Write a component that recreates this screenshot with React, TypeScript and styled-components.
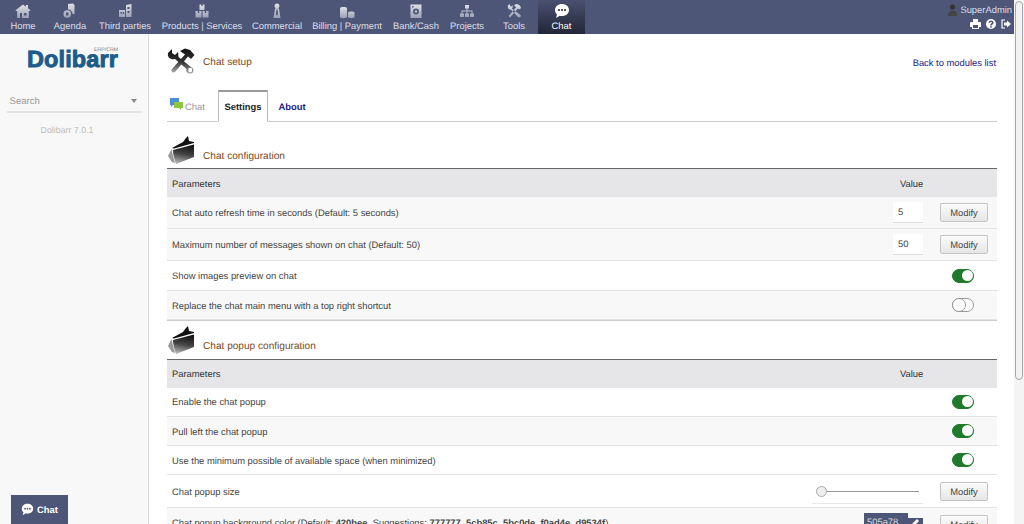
import React from "react";
import styled, { createGlobalStyle } from "styled-components";

const Global = createGlobalStyle`
  html, body { height: 100%; overflow: hidden; }
  body { margin: 0; background: #fff; font-family: "Liberation Sans", Arial, sans-serif; font-size: 9.4px; color: #444; text-rendering: geometricPrecision; }
`;

const Page = styled.div`display: flex; height: 100vh;`;
const Content = styled.div`flex: 1; min-width: 0; overflow: hidden;`;
const ScrollTrack = styled.div`flex: none; width: 10px; background: #f4f4f4; padding: 1px 1px 0 1px; box-sizing: border-box;`;
const ScrollThumb = styled.div`height: 379px; background: #f2f2f2; border: 1.5px solid #a8a8a8; border-radius: 4px; box-sizing: border-box;`;

const TopBar = styled.header`
  height: 34px;
  background: #4e5678;
  display: flex;
  justify-content: space-between;
`;
const Menu = styled.nav`display: flex;`;
const MenuItem = styled.a<{ $w: number; $active?: boolean }>`
  width: ${(p) => p.$w}px;
  height: 34px;
  display: flex;
  flex-direction: column;
  align-items: center;
  color: ${(p) => (p.$active ? "#fff" : "#dcdfe8")};
  font-size: 9.4px;
  line-height: 11px;
  white-space: nowrap;
  background: ${(p) => (p.$active ? "linear-gradient(#4a5070, #222637)" : "none")};
  svg { margin-top: 3px; height: 16px; width: 16px; margin-bottom: 1px; }
`;
const UserArea = styled.div`
  display: flex; flex-direction: column; align-items: flex-end; padding: 3px 2px 0 0; color: #dcdfe8;
`;
const UserName = styled.div`display: flex; align-items: center; gap: 3px; height: 13px;`;
const UserIcons = styled.div`display: flex; gap: 5px; margin-top: 3px; padding-right: 1px; color: #fff;`;

const Body = styled.div`display: flex; min-height: 688px;`;
const Sidebar = styled.aside`
  width: 148px; flex: none; background: #f8f8f8; border-right: 1px solid #ddd; box-sizing: content-box;
  display: flex; flex-direction: column; align-items: center;
`;
const Logo = styled.div`
  margin-top: 12px; margin-right: 3px; position: relative; font-weight: 700; font-size: 23.5px;
  line-height: 26px; color: #1c5d8c; -webkit-text-stroke: 0.9px #1c5a8a;
  letter-spacing: 0.1px;
`;
const LogoTag = styled.span`
  position: absolute; right: 0; top: 1px; font-size: 5.2px; line-height: 6px; font-weight: 400; letter-spacing: 0; color: #777; -webkit-text-stroke: 0;
`;
const Search = styled.div`
  margin-top: 22px; height: 14px; width: 127px; border-bottom: 2px solid #e4e4e4; display: flex; justify-content: space-between; align-items: center;
  padding: 0 4px 3px 3px; color: #999; font-size: 9.6px; box-sizing: content-box; margin-left: -1px;
  &::after { content: ""; border: 3.5px solid transparent; border-top: 4px solid #888; border-bottom: 0; }
`;
const Version = styled.div`margin-top: 12px; margin-right: 14px; color: #bbb; font-size: 8.8px;`;

const Main = styled.main`flex: 1; padding: 0 17px 20px 18px; min-width: 0;`;
const TitleRow = styled.div`display: flex; align-items: center; height: 54px; justify-content: space-between;`;
const TitleLeft = styled.div`display: flex; align-items: center; gap: 8px; color: #7a4a1c; font-size: 10.1px;`;
const TitleText = styled.span`padding-top: 2px;`;
const BackLink = styled.a`color: #1a1a86; font-size: 9.4px; padding-top: 2px; padding-right: 1px;`;

const Tabs = styled.div`display: flex; height: 32px; margin-top: 2px; border-bottom: 1px solid #ccc; align-items: stretch; box-sizing: border-box;`;
const Tab = styled.div<{ $active?: boolean; $muted?: boolean; $w: number }>`
  width: ${(p) => p.$w}px;
  box-sizing: border-box;
  display: flex; align-items: center; justify-content: ${(p) => (p.$muted ? "flex-start" : "center")}; gap: 2px; height: 32px;
  padding-left: ${(p) => (p.$muted ? 3 : 0)}px;
  font-size: 9.4px; font-weight: ${(p) => (p.$muted ? 400 : 700)};
  color: ${(p) => (p.$muted ? "#999" : p.$active ? "#222" : "#1a1a86")};
  ${(p) => p.$active && `background:#fff; border:1px solid #bbb; border-top:2px solid #999; border-bottom:1px solid #fff;`}
`;
const TabIcon = styled.svg`margin-top: -5px;`;

const SectionTitle = styled.div<{ $first?: boolean }>`
  display: flex; align-items: flex-end; gap: 8px; color: #7a4a1c; font-size: 10.1px;
  height: ${(p) => (p.$first ? 46 : 38)}px; padding-bottom: ${(p) => (p.$first ? 6 : 7)}px; box-sizing: border-box;
  svg { margin-bottom: -2px; }
`;
const SectionText = styled.span`padding-left: 1px;`;
const Table = styled.div`border-top: 1px solid #666; border-bottom: 1px solid #ccc;`;
const HeadRow = styled.div<{ $lift?: boolean }>`
  display: flex; align-items: center; height: 28px; box-sizing: border-box; background: #e6e6e8; padding-left: 5px; color: #333;
  padding-bottom: ${(p) => (p.$lift ? 2 : 0)}px;
`;
const HeadValue = styled.div`margin-left: auto; width: 97px;`;
const Row = styled.div<{ $h: number; $alt?: boolean }>`
  display: flex; align-items: center; height: ${(p) => p.$h}px; box-sizing: border-box; padding-left: 5px;
  background: ${(p) => (p.$alt ? "#f8f8f8" : "#fff")}; border-bottom: 1px solid #e4e4e4; color: #444;
`;
const RowEnd = styled.div`margin-left: auto; display: flex; align-items: center;`;
const RaisedLabel = styled.span<{ $lift: number }>`margin-bottom: ${(p) => p.$lift}px;`;
const Input = styled.div`
  width: 30px; height: 21px; box-sizing: border-box; background: #fff; border-bottom: 1px solid #ddd; padding: 4px 0 0 5px; margin-right: 17px; line-height: 12px;
`;
const Btn = styled.div`
  width: 46px; height: 17px; border: 1px solid #c4c4c4; border-radius: 2px; background: linear-gradient(#fbfbfb, #e6e6e6);
  display: flex; align-items: center; justify-content: center; color: #444; margin-right: 9px; box-sizing: content-box;
`;
const Toggle = styled.div<{ $on?: boolean }>`
  width: 22px; height: 14px; border-radius: 7px; box-sizing: border-box; margin-right: 23px; position: relative;
  background: ${(p) => (p.$on ? "#1f7a2c" : "#fff")};
  border: 1.5px solid ${(p) => (p.$on ? "#1f7a2c" : "#999")};
  &::after {
    content: ""; position: absolute; border-radius: 50%; background: #fff; box-sizing: border-box;
    ${(p) => (p.$on ? "right: 0; top: 0; width: 11px; height: 11px;" : "left: -1.5px; top: -1.5px; width: 14px; height: 14px; border: 1.5px solid #999;")}
  }
`;
const Slider = styled.div`
  width: 111px; margin-right: 17px; height: 25px; position: relative; border-bottom: 1px solid #e8e8e8; box-sizing: border-box;
  &::before { content: ""; position: absolute; left: 9px; right: 4px; top: 12px; height: 1px; background: #999; }
  &::after { content: ""; position: absolute; left: 4px; top: 7px; width: 11px; height: 11px; border: 1px solid #aaa; border-radius: 50%; background: #eee; box-sizing: border-box; }
`;
const ColorSwatch = styled.div`
  position: relative; width: 59px; height: 15px; background: #4e5678; color: #ddd; padding: 3px 0 0 3px; box-sizing: border-box; margin-right: 17px;
  clip-path: polygon(0 0, 44px 0, 44px 5px, 59px 5px, 59px 15px, 0 15px);
  svg { position: absolute; right: 3px; top: 5px; }
`;
const EndRowTop = styled(RowEnd)`align-self: flex-start; padding-top: 7px; align-items: flex-start;`;
const SwatchSlot = styled.div`display: flex; margin-top: -2px;`;
const ChatFloat = styled.div`
  position: fixed; left: 11px; bottom: 0; width: 57px; height: 29px; background: #4e5678; color: #fff; font-weight: 700; font-size: 9.4px;
  display: flex; align-items: center; justify-content: center; gap: 3px;
`;

const Ico = ({ d }: { d: string }) => (
  <svg viewBox="0 0 16 16">
    <path fill="url(#menuFill)" fillRule="evenodd" d={d} />
  </svg>
);
const icons = {
  home: "M8 1.500 L11 3.800 V2 H13 V5.300 L15.500 7.300 L15 8 H13.800 V15 H2.200 V8 H1 L0.500 7.300 Z M5 10 V15 H7 V10 Z M9 10 V12.500 H11.500 V10 Z",
  agenda: "M6 1 L11 0.500 L12.500 2 V11 H10.500 A4.500 4.500 0 0 0 6 6.500 Z M1.500 11 A3.700 3.700 0 1 1 9 11 A3.700 3.700 0 1 1 1.500 11 Z M4 11 A1.300 1.300 0 1 0 6.500 11 A1.300 1.300 0 1 0 4 11 Z",
  third: "M9 2 L14.500 1 V14 H9 Z M10.500 4 V6 H12.500 V4 Z M10.500 8 V10 H12.500 V8 Z M2 7 H8 V14 H2 Z M3.500 9 V11 H4.800 V9 Z M5.800 9 V11 H7 V9 Z",
  products: "M5.500 1.500 H10.500 V7 H5.500 Z M1.500 8 H7.500 V14.500 H1.500 Z M8.500 8 H14.500 V14.500 H8.500 Z M3.800 8 V10 H5.200 V8 Z M10.800 8 V10 H12.200 V8 Z M7.300 1.500 V3 H8.700 V1.500 Z",
  commercial: "M8 0.500 A2.500 2.500 0 1 1 7.900 0.500 Z M6 5.500 H10 L11.500 15 H4.500 Z M7.400 6.500 L7 11 L8 13 L9 11 L8.600 6.500 Z",
  billing: "M1 5 C1 3.500 8 3.500 8 5 V14 C8 15.500 1 15.500 1 14 Z M9 9.500 C9 8 15.500 8 15.500 9.500 V14 C15.500 15.500 9 15.500 9 14 Z",
  bank: "M2.500 1.500 H13.500 V15 H2.500 Z M5 8.500 A3 3 0 1 0 11 8.500 A3 3 0 1 0 5 8.500 Z M6.700 8.500 A1.300 1.300 0 1 1 9.300 8.500 A1.300 1.300 0 1 1 6.700 8.500 Z M4 3 V4.500 H5.500 V3 Z",
  projects: "M6 2 H10 V5.500 H6 Z M1 10.500 H5 V14 H1 Z M6 10.500 H10 V14 H6 Z M11 10.500 H15 V14 H11 Z M2.500 7.500 H7.500 V5.500 H8.500 V7.500 H13.500 V10.500 H12.500 V8.500 H8.500 V10.500 H7.500 V8.500 H3.500 V10.500 H2.500 Z",
  tools: "M2 2.500 L3.800 1 L4.200 3 L5.500 3.500 L6.500 2 C7 4 6.500 5 6 5.800 L14.500 12 C15.500 13.500 13.500 15.500 12 14 L5 6.800 C3 7 1 5 2 2.500 Z M8 2 L11 1 L14 2.500 L15 5 L13.500 6.500 L12 5.500 L4 14.500 L2.500 13 L10 4.500 Z",
  chat: "M8 1 C12 1 15 3.600 15 7 C15 10.400 12 13 8 13 C7.200 13 6.500 12.900 5.800 12.700 L2 15 L3 11.500 C1.700 10.300 1 8.700 1 7 C1 3.600 4 1 8 1 Z",
};

const items: [string, number, keyof typeof icons][] = [
  ["Home", 46, "home"],
  ["Agenda", 48, "agenda"],
  ["Third parties", 62, "third"],
  ["Products | Services", 92, "products"],
  ["Commercial", 58, "commercial"],
  ["Billing | Payment", 82, "billing"],
  ["Bank/Cash", 56, "bank"],
  ["Projects", 46, "projects"],
  ["Tools", 48, "tools"],
];

const ChatBubble = ({ size, fill, dot }: { size: number; fill: string; dot: string }) => (
  <svg width={size} height={size} viewBox="0 0 16 16">
    <path fill={fill} d={icons.chat} />
    <circle cx="5" cy="7" r="1.100" fill={dot} />
    <circle cx="8" cy="7" r="1.100" fill={dot} />
    <circle cx="11" cy="7" r="1.100" fill={dot} />
  </svg>
);

const ToolsIcon = () => (
  <svg width="28" height="26" viewBox="0 0 28 26">
    <defs>
      <linearGradient id="tg" x1="0" y1="0" x2="0" y2="1"><stop offset="0" stopColor="#111" /><stop offset="0.55" stopColor="#333" /><stop offset="1" stopColor="#aaa" /></linearGradient>
    </defs>
    <path fill="url(#tg)" fillRule="evenodd" d="M1 5 L5 1 L5 5 L8 7 L11 4 L11.500 9 L24 19 C27.500 21 27 25 24 25.500 C21 26 18.500 24 19.500 21 L8 11 C4 12 0 10 1 5 Z M21.500 22 A1.800 1.800 0 1 0 25 22 A1.800 1.800 0 1 0 21.500 22 Z" />
    <path fill="url(#tg)" d="M13 3 L18 0.500 L23 2 L27.500 7 L24 11 L21 8.500 L8 24 C6 25.500 3.500 23 5 21 L18 6.500 Z" />
  </svg>
);
const FolderIcon = () => (
  <svg width="27" height="28" viewBox="0 0 27 28">
    <defs>
      <linearGradient id="fg" x1="0.600" y1="0" x2="0.400" y2="1"><stop offset="0" stopColor="#111" /><stop offset="0.5" stopColor="#444" /><stop offset="1" stopColor="#b5b5b5" /></linearGradient>
    </defs>
    <path fill="#111" d="M5 12 L16 6 L19 2 L21 0 L22 5 L27 6 L27 7 L7 12.500 Z" />
    <path fill="#999" d="M1 20 L4.500 13 L6.500 22 L8 27 L5 26 Z" />
    <path fill="url(#fg)" d="M6 14 L27 8.500 L27 21 L9 28 C7.500 24 6 19 6 14 Z" />
  </svg>
);

const Parameters = ({ lift }: { lift?: boolean }) => (
  <HeadRow $lift={lift}>Parameters<HeadValue>Value</HeadValue></HeadRow>
);

export default function App() {
  return (
    <Page>
      <Global />
      <svg width="0" height="0" style={{ position: "absolute" }}>
        <defs>
          <linearGradient id="menuFill" x1="0" y1="0" x2="0" y2="1"><stop offset="0" stopColor="#dfe1e8" /><stop offset="1" stopColor="#9ba0b4" /></linearGradient>
        </defs>
      </svg>
      <Content>
        <TopBar>
          <Menu>
            {items.map(([label, w, ic]) => (
              <MenuItem key={label} $w={w}>
                <Ico d={icons[ic]} />
                {label}
              </MenuItem>
            ))}
            <MenuItem $w={47} $active>
              <ChatBubble size={16} fill="#fff" dot="#333" />
              Chat
            </MenuItem>
          </Menu>
          <UserArea>
            <UserName>
              <svg width="9" height="12" viewBox="0 0 9 12">
                <circle cx="4.500" cy="3" r="2.500" fill="#333" />
                <path fill="#444" d="M0 12 C0 8 2 6.500 4.500 6.500 C7 6.500 9 8 9 12 Z" />
              </svg>
              SuperAdmin
            </UserName>
            <UserIcons>
              <svg width="11" height="10" viewBox="0 0 11 10"><path fill="#fff" fillRule="evenodd" d="M3 0 H8 V3 H10 Q11 3 11 4 V8 H9 V10 H2 V8 H0 V4 Q0 3 1 3 H3 Z M3 6 V9 H8 V6 Z" /></svg>
              <svg width="10" height="10" viewBox="0 0 10 10"><circle cx="5" cy="5" r="5" fill="#fff" /><path fill="none" stroke="#4e5678" strokeWidth="1.600" d="M3.300 3.800 C3.300 1.800 6.800 1.800 6.800 3.800 C6.800 5 5 5 5 6.500" /><rect x="4.200" y="7.200" width="1.600" height="1.500" fill="#4e5678" /></svg>
              <svg width="10" height="10" viewBox="0 0 10 10"><path fill="none" stroke="#fff" strokeWidth="1.200" d="M4 1 H1 V9 H4" /><path fill="#fff" d="M3 3.500 H6 V1.500 L10 5 L6 8.500 V6.500 H3 Z" /></svg>
            </UserIcons>
          </UserArea>
        </TopBar>
        <Body>
          <Sidebar>
            <Logo>Dolibarr<LogoTag>ERP/CRM</LogoTag></Logo>
            <Search>Search</Search>
            <Version>Dolibarr 7.0.1</Version>
          </Sidebar>
          <Main>
            <TitleRow>
              <TitleLeft><ToolsIcon /><TitleText>Chat setup</TitleText></TitleLeft>
              <BackLink>Back to modules list</BackLink>
            </TitleRow>
            <Tabs>
              <Tab $w={51} $muted>
                <TabIcon width="13" height="12" viewBox="0 0 13 12"><path fill="#4a90d9" d="M0 0 H9 V7 H3 L1 9 V7 H0 Z" /><path fill="#8cc63f" d="M4 4 H13 V10 H11 V12 L9 10 H4 Z" /></TabIcon>
                Chat
              </Tab>
              <Tab $w={50} $active>Settings</Tab>
              <Tab $w={48}>About</Tab>
            </Tabs>
            <SectionTitle $first><FolderIcon /><SectionText>Chat configuration</SectionText></SectionTitle>
            <Table>
              <Parameters />
              <Row $h={32} $alt>Chat auto refresh time in seconds (Default: 5 seconds)<RowEnd><Input>5</Input><Btn>Modify</Btn></RowEnd></Row>
              <Row $h={32} $alt>Maximum number of messages shown on chat (Default: 50)<RowEnd><Input>50</Input><Btn>Modify</Btn></RowEnd></Row>
              <Row $h={30}>Show images preview on chat<RowEnd><Toggle $on /></RowEnd></Row>
              <Row $h={29} $alt>Replace the chat main menu with a top right shortcut<RowEnd><Toggle /></RowEnd></Row>
            </Table>
            <SectionTitle><FolderIcon /><SectionText>Chat popup configuration</SectionText></SectionTitle>
            <Table>
              <Parameters lift />
              <Row $h={29}><RaisedLabel $lift={2}>Enable the chat popup</RaisedLabel><RowEnd><Toggle $on /></RowEnd></Row>
              <Row $h={29} $alt>Pull left the chat popup<RowEnd><Toggle $on /></RowEnd></Row>
              <Row $h={29}>Use the minimum possible of available space (when minimized)<RowEnd><Toggle $on /></RowEnd></Row>
              <Row $h={33}>Chat popup size<RowEnd><Slider /><Btn>Modify</Btn></RowEnd></Row>
              <Row $h={33} $alt>
                <RaisedLabel $lift={3}>Chat popup background color (Default: <b>420bee</b>, Suggestions: <b>777777, 5cb85c, 5bc0de, f0ad4e, d9534f</b>)</RaisedLabel>
                <EndRowTop>
                  <SwatchSlot>
                    <ColorSwatch>
                      505a78
                      <svg width="9" height="9" viewBox="0 0 9 9"><path fill="#fff" d="M1 8 L1.500 5.500 L6 1 L8 3 L3.500 7.500 Z" /></svg>
                    </ColorSwatch>
                  </SwatchSlot>
                  <Btn>Modify</Btn>
                </EndRowTop>
              </Row>
            </Table>
          </Main>
        </Body>
      </Content>
      <ScrollTrack><ScrollThumb /></ScrollTrack>
      <ChatFloat><ChatBubble size={13} fill="#fff" dot="#4e5678" />Chat</ChatFloat>
    </Page>
  );
}
